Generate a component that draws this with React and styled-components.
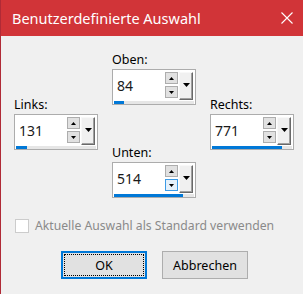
import React from "react";
import styled, { createGlobalStyle } from "styled-components";

const GlobalStyle = createGlobalStyle`
  html, body {
    margin: 0;
    padding: 0;
    background: #f0f0f0;
  }
  * {
    box-sizing: border-box;
  }
`;

const spinners = [
  { key: "oben", label: "Oben:", value: "84", bar: 10, col: 2, row: "1 / 3" },
  { key: "links", label: "Links:", value: "131", bar: 11, col: 1, row: "2 / 5" },
  { key: "rechts", label: "Rechts:", value: "771", bar: 70, col: 3, row: "2 / 5" },
  { key: "unten", label: "Unten:", value: "514", bar: 69, col: 2, row: "4 / 6", hot: true },
];

const App = () => {
  return (
    <Window>
      <GlobalStyle />
      <TitleBar>
        <Title>Benutzerdefinierte Auswahl</Title>
        <CloseIcon viewBox="0 0 12 12">
          <path d="M0.5 0.5 L11.5 11.5 M11.5 0.5 L0.5 11.5" stroke="#fff" strokeWidth="1.1" />
        </CloseIcon>
      </TitleBar>
      <Body>
        <SpinGrid>
          {spinners.map((s) => (
            <Field key={s.key} $col={s.col} $row={s.row}>
              <Label>{s.label}</Label>
              <SpinBox>
                <SpinRow>
                  <Value>{s.value}</Value>
                  <Arrows>
                    <ArrowButton>
                      <Tri viewBox="0 0 5 3">
                        <path d="M2.5 0 L5 3 L0 3 Z" fill="#000" />
                      </Tri>
                    </ArrowButton>
                    <ArrowButton $hot={s.hot}>
                      <Tri viewBox="0 0 5 3">
                        <path d="M0 0 L5 0 L2.5 3 Z" fill="#000" />
                      </Tri>
                    </ArrowButton>
                  </Arrows>
                  <DropButton>
                    <DropTri viewBox="0 0 7 4">
                      <path d="M0 0 L7 0 L3.5 4 Z" fill="#000" />
                    </DropTri>
                  </DropButton>
                </SpinRow>
                <Track>
                  <Fill style={{ width: s.bar }} />
                </Track>
              </SpinBox>
            </Field>
          ))}
        </SpinGrid>
        <CheckRow>
          <CheckBox />
          <CheckText>Aktuelle Auswahl als Standard verwenden</CheckText>
        </CheckRow>
        <Buttons>
          <Button $primary>
            <Focus>OK</Focus>
          </Button>
          <Button>Abbrechen</Button>
        </Buttons>
      </Body>
    </Window>
  );
};

export default App;

const Window = styled.div`
  width: 303px;
  height: 294px;
  display: flex;
  flex-direction: column;
  border-left: 1px solid #b02a36;
  background: #f0f0f0;
  font-family: "Noto Sans", "Liberation Sans", sans-serif;
  overflow: hidden;
`;

const TitleBar = styled.div`
  height: 36px;
  flex: none;
  display: flex;
  align-items: center;
  justify-content: space-between;
  background: #d13438;
  padding: 0 10px 0 11px;
`;

const Title = styled.div`
  color: #fff;
  font-size: 14.5px;
  margin-top: -1px;
`;

const CloseIcon = styled.svg`
  width: 12px;
  height: 12px;
`;

const Body = styled.div`
  display: flex;
  flex-direction: column;
  padding: 16px 0 0 13px;
`;

const SpinGrid = styled.div`
  display: grid;
  grid-template-columns: 84px 84px 84px;
  grid-template-rows: 45px 8px 40px 5px 48px;
  column-gap: 14px;
`;

const Field = styled.div`
  grid-column: ${(p) => p.$col};
  grid-row: ${(p) => p.$row};
  display: flex;
  flex-direction: column;
`;

const Label = styled.div`
  font-size: 12.5px;
  line-height: 16px;
  height: 17px;
  color: #000;
`;

const SpinBox = styled.div`
  width: 84px;
  height: 36px;
  display: flex;
  flex-direction: column;
  background: #fff;
  border: 1px solid #acacac;
  padding: 2px 1px 0 1px;
`;

const SpinRow = styled.div`
  height: 28px;
  display: flex;
  align-items: stretch;
`;

const Value = styled.div`
  flex: 1;
  font-size: 14px;
  line-height: 28px;
  padding-left: 3px;
  color: #1a1a1a;
`;

const Arrows = styled.div`
  width: 13px;
  display: flex;
  flex-direction: column;
  gap: 2px;
`;

const ArrowButton = styled.div`
  height: 12px;
  display: flex;
  align-items: center;
  justify-content: center;
  background: ${(p) => (p.$hot ? "#e5f1fb" : "#e1e1e1")};
  border: 1px solid ${(p) => (p.$hot ? "#3c9be6" : "#adadad")};
`;

const Tri = styled.svg`
  width: 5px;
  height: 3px;
`;

const DropButton = styled.div`
  width: 14px;
  margin-left: 1px;
  margin-right: 1px;
  display: flex;
  align-items: center;
  justify-content: center;
  background: #f0f0f0;
  border-top: 1px solid #f8f8f8;
  border-left: 1px solid #f8f8f8;
  border-right: 1px solid #696969;
  border-bottom: 1px solid #696969;
  box-shadow: inset -1px -1px 0 #a0a0a0;
`;

const DropTri = styled.svg`
  width: 7px;
  height: 4px;
  margin-top: -3px;
`;

const Track = styled.div`
  height: 3px;
  margin-top: 1px;
  background: #e6e6e6;
`;

const Fill = styled.div`
  height: 3px;
  background: #0078d7;
`;

const CheckRow = styled.div`
  display: flex;
  align-items: center;
  gap: 6px;
  margin-top: 20px;
  margin-left: 1px;
`;

const CheckBox = styled.div`
  width: 14px;
  height: 14px;
  border: 1px solid #cccccc;
  background: #fff;
`;

const CheckText = styled.div`
  font-size: 12.2px;
  color: #8a8a8a;
  margin-top: -1px;
`;

const Buttons = styled.div`
  display: flex;
  gap: 15px;
  margin-top: 17px;
  padding-left: 47px;
`;

const Button = styled.div`
  width: 86px;
  height: 28px;
  display: flex;
  align-items: center;
  justify-content: center;
  background: #e1e1e1;
  border: ${(p) => (p.$primary ? "2px solid #0078d7" : "1px solid #adadad")};
  padding: 1px;
  font-size: 12.5px;
  color: #000;
`;

const Focus = styled.div`
  width: 100%;
  height: 100%;
  display: flex;
  align-items: center;
  justify-content: center;
  border: 1px dotted #000;
`;
